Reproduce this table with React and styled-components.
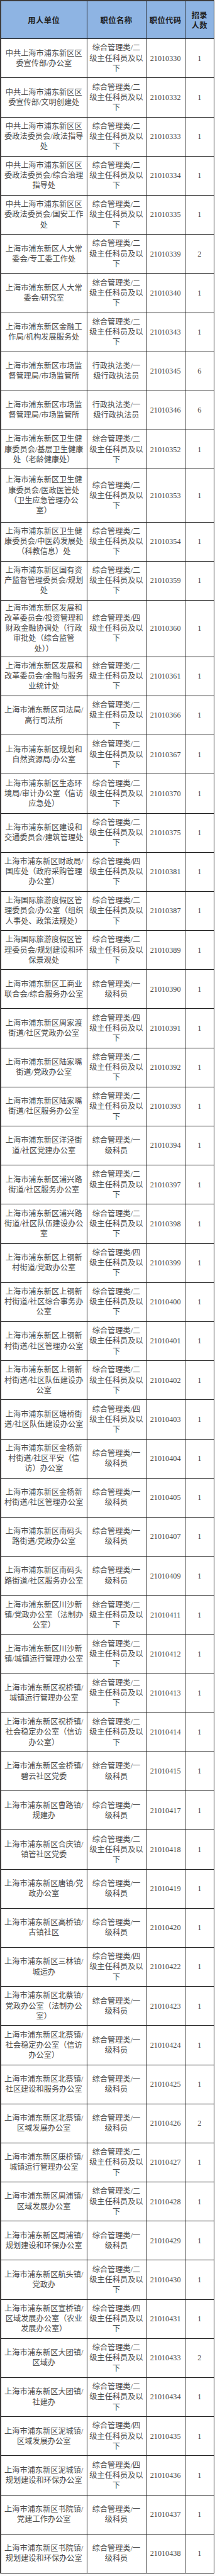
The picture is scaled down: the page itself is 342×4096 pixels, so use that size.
import React from 'react'
import styled, { createGlobalStyle } from 'styled-components'

const GlobalStyle = createGlobalStyle`
  html, body {
    margin: 0;
    padding: 0;
    background: #ffffff;
  }
  body {
    font-family: "Liberation Serif", "Noto Sans CJK SC", serif;
  }
`

const POS = {
  two: '综合管理类/二\n级主任科员及以\n下',
  four: '综合管理类/四\n级主任科员及以\n下',
  one: '综合管理类/一\n级科员',
  law: '行政执法类/一\n级行政执法员',
}

// [用人单位, 职位, 代码, 人数, 行高(参考图像素)]
const rows = [
  ['中共上海市浦东新区区\n委宣传部/办公室', 'two', '21010330', 1],
  ['中共上海市浦东新区区\n委宣传部/文明创建处', 'two', '21010332', 1],
  ['中共上海市浦东新区区\n委政法委员会/政法指导\n处', 'two', '21010333', 1],
  ['中共上海市浦东新区区\n委政法委员会/综合治理\n指导处', 'two', '21010334', 1],
  ['中共上海市浦东新区区\n委政法委员会/国安工作\n处', 'two', '21010335', 1],
  ['上海市浦东新区人大常\n委会/专工委工作处', 'two', '21010339', 2],
  ['上海市浦东新区人大常\n委会/研究室', 'two', '21010340', 1],
  ['上海市浦东新区金融工\n作局/机构发展服务处', 'two', '21010343', 1],
  ['上海市浦东新区市场监\n督管理局/市场监管所', 'law', '21010345', 6],
  ['上海市浦东新区市场监\n督管理局/市场监管所', 'law', '21010346', 6],
  ['上海市浦东新区卫生健\n康委员会/基层卫生健康\n处（老龄健康处）', 'two', '21010352', 1],
  ['上海市浦东新区卫生健\n康委员会/医政医管处\n（卫生应急管理办公\n室）', 'two', '21010353', 1, 122],
  ['上海市浦东新区卫生健\n康委员会/中医药发展处\n（科教信息）处', 'two', '21010354', 1],
  ['上海市浦东新区国有资\n产监督管理委员会/规划\n处', 'two', '21010359', 1],
  ['上海市浦东新区发展和\n改革委员会/投资管理和\n财政金融协调处（行政\n审批处（综合监管\n处））', 'four', '21010360', 1, 130],
  ['上海市浦东新区发展和\n改革委员会/金融与服务\n业统计处', 'two', '21010361', 1],
  ['上海市浦东新区司法局/\n高行司法所', 'two', '21010366', 1],
  ['上海市浦东新区规划和\n自然资源局/办公室', 'two', '21010367', 1],
  ['上海市浦东新区生态环\n境局/审计办公室（信访\n应急处）', 'two', '21010370', 1],
  ['上海市浦东新区建设和\n交通委员会/建筑管理处', 'two', '21010375', 1],
  ['上海市浦东新区财政局/\n国库处（政府采购管理\n办公室）', 'four', '21010381', 1],
  ['上海国际旅游度假区管\n理委员会/办公室（组织\n人事处、政策法规处）', 'two', '21010387', 1],
  ['上海国际旅游度假区管\n理委员会/规划建设和环\n保景观处', 'two', '21010389', 1],
  ['上海市浦东新区工商业\n联合会/综合服务办公室', 'one', '21010390', 1],
  ['上海市浦东新区周家渡\n街道/社区党政办公室', 'four', '21010391', 1],
  ['上海市浦东新区陆家嘴\n街道/党政办公室', 'two', '21010392', 1],
  ['上海市浦东新区陆家嘴\n街道/社区服务办公室', 'two', '21010393', 1],
  ['上海市浦东新区洋泾街\n道/社区党建办公室', 'one', '21010394', 1],
  ['上海市浦东新区浦兴路\n街道/社区服务办公室', 'two', '21010397', 1],
  ['上海市浦东新区浦兴路\n街道/社区队伍建设办公\n室', 'two', '21010398', 1],
  ['上海市浦东新区上钢新\n村街道/党政办公室', 'four', '21010399', 1],
  ['上海市浦东新区上钢新\n村街道/社区综合事务办\n公室', 'two', '21010400', 1],
  ['上海市浦东新区上钢新\n村街道/社区管理办公室', 'two', '21010401', 1],
  ['上海市浦东新区上钢新\n村街道/社区队伍建设办\n公室', 'two', '21010402', 1],
  ['上海市浦东新区塘桥街\n道/社区队伍建设办公室', 'four', '21010403', 1],
  ['上海市浦东新区金杨新\n村街道/社区平安（信\n访）办公室', 'one', '21010404', 1],
  ['上海市浦东新区金杨新\n村街道/社区管理办公室', 'one', '21010405', 1],
  ['上海市浦东新区南码头\n路街道/党政办公室', 'one', '21010407', 1],
  ['上海市浦东新区南码头\n路街道/社区服务办公室', 'one', '21010409', 1],
  ['上海市浦东新区川沙新\n镇/党政办公室（法制办\n公室）', 'two', '21010411', 1],
  ['上海市浦东新区川沙新\n镇/城镇运行管理办公室', 'two', '21010412', 1],
  ['上海市浦东新区祝桥镇/\n城镇运行管理办公室', 'two', '21010413', 1],
  ['上海市浦东新区祝桥镇/\n社会稳定办公室（信访\n办公室）', 'two', '21010414', 1],
  ['上海市浦东新区金桥镇/\n碧云社区党委', 'one', '21010415', 1],
  ['上海市浦东新区曹路镇/\n规建办', 'one', '21010417', 1],
  ['上海市浦东新区合庆镇/\n镇管社区党委', 'two', '21010418', 1],
  ['上海市浦东新区唐镇/党\n政办公室', 'one', '21010419', 1],
  ['上海市浦东新区高桥镇/\n古镇社区', 'one', '21010420', 1],
  ['上海市浦东新区三林镇/\n城运办', 'four', '21010422', 1],
  ['上海市浦东新区北蔡镇/\n党政办公室（法制办公\n室）', 'one', '21010423', 1],
  ['上海市浦东新区北蔡镇/\n社会稳定办公室（信访\n办公室）', 'one', '21010424', 1],
  ['上海市浦东新区北蔡镇/\n社区建设和服务办公室', 'one', '21010425', 1],
  ['上海市浦东新区北蔡镇/\n区域发展办公室', 'one', '21010426', 2],
  ['上海市浦东新区康桥镇/\n城镇运行管理办公室', 'two', '21010427', 1],
  ['上海市浦东新区周浦镇/\n区域发展办公室', 'two', '21010428', 1],
  ['上海市浦东新区周浦镇/\n规划建设和环保办公室', 'one', '21010429', 1],
  ['上海市浦东新区航头镇/\n党政办', 'two', '21010430', 1],
  ['上海市浦东新区宣桥镇/\n区域发展办公室（农业\n发展办公室）', 'four', '21010431', 1],
  ['上海市浦东新区大团镇/\n区域办', 'two', '21010433', 2],
  ['上海市浦东新区大团镇/\n社建办', 'two', '21010434', 1],
  ['上海市浦东新区泥城镇/\n区域发展办公室', 'four', '21010435', 1],
  ['上海市浦东新区泥城镇/\n规划建设和环保办公室', 'four', '21010436', 1],
  ['上海市浦东新区书院镇/\n党建工作办公室', 'one', '21010437', 1],
  ['上海市浦东新区书院镇/\n规划建设和环保办公室', 'one', '21010438', 1],
]

const S = 0.691

export default function App() {
  return (
    <>
      <GlobalStyle />
      <Table>
        <Row $h={90}>
          <HeadCell>用人单位</HeadCell>
          <HeadCell>职位名称</HeadCell>
          <HeadCell>职位代码</HeadCell>
          <HeadCell>{'招录\n人数'}</HeadCell>
        </Row>
        {rows.map(([unit, pos, code, count, h], i) => (
          <Row key={i} $h={h || 90}>
            <Cell>{unit}</Cell>
            <Cell>{POS[pos]}</Cell>
            <Cell>{code}</Cell>
            <Cell>{count}</Cell>
          </Row>
        ))}
      </Table>
    </>
  )
}

const Table = styled.div`
  width: 341px;
  border-left: 2px solid #3d3a3a;
  border-top: 2px solid #3d3a3a;
  box-sizing: border-box;
  background: #ffffff;
`

const Row = styled.div`
  display: grid;
  grid-template-columns: 136.5px 94px 62.2px 46.3px;
  height: ${p => (p.$h * S).toFixed(2)}px;
  box-sizing: border-box;
  border-bottom: 1px solid #1f1f1f;
  &:first-child {
    height: ${p => (p.$h * S - 2).toFixed(2)}px;
    background: #8eb4e3;
  }
`

const Cell = styled.div`
  display: flex;
  align-items: center;
  justify-content: center;
  text-align: center;
  box-sizing: border-box;
  border-right: 1px solid #1f1f1f;
  white-space: pre;
  font-size: 12.2px;
  line-height: 16.2px;
  color: #4a4a4a;
  overflow: hidden;
`

const HeadCell = styled(Cell)`
  font-family: "Noto Sans CJK SC", sans-serif;
  font-weight: 700;
  font-size: 12.4px;
  line-height: 16px;
  letter-spacing: 0.3px;
  color: #222222;
`
